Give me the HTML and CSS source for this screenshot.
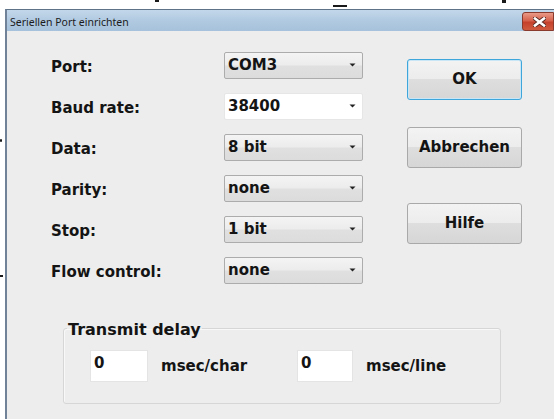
FILE: index.html
```html
<!DOCTYPE html>
<html lang="de">
<head>
<meta charset="utf-8">
<title>Seriellen Port einrichten</title>
<link rel="stylesheet" href="styles.css">
</head>
<body>
<div class="screen">
  <!-- bits of the document behind the dialog -->
  <span class="speck speck-a"></span>
  <span class="speck speck-b"></span>
  <span class="speck speck-c"></span>
  <span class="speck speck-d"></span>
  <span class="speck speck-e"></span>
  <div class="window">
    <div class="titlebar">
      <span class="title">Seriellen Port einrichten</span>
      <button class="close" type="button" aria-label="Schließen">
        <svg width="13" height="10" viewBox="0 0 13 10">
          <path d="M2 1.5L11 8.5M11 1.5L2 8.5" stroke="#5a2a22" stroke-width="4.4" stroke-linecap="square"/>
          <path d="M2 1.5L11 8.5M11 1.5L2 8.5" stroke="#ffffff" stroke-width="2.6" stroke-linecap="square"/>
        </svg>
      </button>
    </div>
    <div class="client">
      <div class="main">
        <div class="form">
          <span class="label">Port:</span>
          <div class="combo"><span>COM3</span><svg class="arrow" width="7" height="4" viewBox="0 0 7 4"><path d="M0.5 0.5h6L3.5 3.5z" fill="#222"/></svg></div>
          <span class="label">Baud rate:</span>
          <div class="combo combo-edit"><span>38400</span><svg class="arrow" width="7" height="4" viewBox="0 0 7 4"><path d="M0.5 0.5h6L3.5 3.5z" fill="#222"/></svg></div>
          <span class="label">Data:</span>
          <div class="combo"><span>8 bit</span><svg class="arrow" width="7" height="4" viewBox="0 0 7 4"><path d="M0.5 0.5h6L3.5 3.5z" fill="#222"/></svg></div>
          <span class="label">Parity:</span>
          <div class="combo"><span>none</span><svg class="arrow" width="7" height="4" viewBox="0 0 7 4"><path d="M0.5 0.5h6L3.5 3.5z" fill="#222"/></svg></div>
          <span class="label">Stop:</span>
          <div class="combo"><span>1 bit</span><svg class="arrow" width="7" height="4" viewBox="0 0 7 4"><path d="M0.5 0.5h6L3.5 3.5z" fill="#222"/></svg></div>
          <span class="label">Flow control:</span>
          <div class="combo"><span>none</span><svg class="arrow" width="7" height="4" viewBox="0 0 7 4"><path d="M0.5 0.5h6L3.5 3.5z" fill="#222"/></svg></div>
        </div>
        <div class="buttons">
          <button class="btn btn-default" type="button">OK</button>
          <button class="btn" type="button">Abbrechen</button>
          <button class="btn btn-help" type="button">Hilfe</button>
        </div>
      </div>
      <fieldset class="delay">
        <legend>Transmit delay</legend>
        <div class="delay-row">
          <div class="pair"><span class="field">0</span><span class="unit">msec/char</span></div>
          <div class="pair"><span class="field field-narrow">0</span><span class="unit">msec/line</span></div>
        </div>
      </fieldset>
    </div>
  </div>
</div>
</body>
</html>
```

FILE: styles.css
```css
* {
  box-sizing: border-box;
}

html, body {
  margin: 0;
  padding: 0;
  background: #ffffff;
}

.screen {
  position: relative;
  width: 554px;
  height: 419px;
  overflow: hidden;
  padding: 9px 0 0 5px;
}

/* stray glyph fragments of the page underneath */
.speck {
  position: absolute;
  background: #1a1a1a;
}

.speck-a { left: 155px; top: 0; width: 4px; height: 2px; }
.speck-b { left: 333px; top: 5px; width: 14px; height: 2px; }
.speck-c { left: 502px; top: 0; width: 4px; height: 3px; }
.speck-d { left: 0; top: 139px; width: 2px; height: 3px; border-radius: 1px; }
.speck-e { left: 0; top: 275px; width: 3px; height: 2px; }

.window {
  width: 549px;
  height: 410px;
  border-left: 2px solid #6f8297;
  border-top: 1px solid #5f7388;
  display: flex;
  flex-direction: column;
  font-family: "DejaVu Sans", sans-serif;
  font-weight: bold;
  color: #141414;
}

/* caption strip */
.titlebar {
  height: 21px;
  flex: none;
  display: flex;
  align-items: flex-start;
  background: linear-gradient(#c3d7ea, #b2cbe2 45%, #a6c1db);
}

.title {
  font-family: "Noto Sans", sans-serif;
  font-weight: normal;
  font-size: 10.5px;
  line-height: 21px;
  color: #1b1b1b;
  padding: 2px 0 0 3px;
}

.close {
  margin: 2px 0 0 auto;
  width: 32px;
  height: 19px;
  padding: 0 0 0 2px;
  border: 1px solid #8a3a2c;
  border-radius: 3px 0 0 3px;
  background: linear-gradient(#e99a88, #d6624c 45%, #c5412c 55%, #cf5a3e);
  display: flex;
  align-items: center;
  justify-content: center;
}

.close svg {
  display: block;
}

/* dialog body */
.client {
  flex: 1;
  background: #ededed;
  padding: 21px 0 0 44px;
}

.main {
  display: flex;
  gap: 44px;
}

.form {
  display: grid;
  grid-template-columns: 173px 139px;
  grid-auto-rows: 27px;
  row-gap: 14px;
  align-items: center;
}

.label {
  font-size: 15px;
  line-height: 17px;
  padding-top: 3px;
}

.combo {
  height: 27px;
  display: flex;
  align-items: center;
  justify-content: space-between;
  padding: 0 6px 1px 3px;
  border: 1px solid #acacac;
  border-radius: 2px;
  background: linear-gradient(#f4f4f4, #ececec 48%, #e0e0e0 52%, #dcdcdc);
  font-size: 15px;
  line-height: 17px;
}

.combo-edit {
  background: #ffffff;
  border-color: #e6e6e6;
}

.arrow {
  display: block;
  flex: none;
}

.buttons {
  display: flex;
  flex-direction: column;
  gap: 27px;
  padding-top: 7px;
}

.btn {
  width: 115px;
  height: 41px;
  border: 1px solid #a9a9a9;
  border-radius: 3px;
  background: linear-gradient(#f3f3f3, #ececec 50%, #dedede 50%, #d6d6d6);
  font-family: "DejaVu Sans", sans-serif;
  font-weight: bold;
  font-size: 15px;
  color: #141414;
  padding: 0 0 2px;
}

.btn-default {
  border-color: #3ea6db;
  box-shadow: inset 0 0 0 1px #c8e6f6;
}

.btn-help {
  margin-top: 8px;
}

/* transmit delay group */
.delay {
  width: 438px;
  margin: 35px 0 0 12px;
  padding: 12px 0 21px 3px;
  border: 1px solid #d6d6d6;
  border-radius: 3px;
  box-shadow: inset 1px 1px 0 #f8f8f8;
}

.delay legend {
  padding: 0 1px;
  font-size: 16px;
  line-height: 19px;
  position: relative;
  top: 1px;
}

.delay-row {
  display: grid;
  grid-template-columns: 207px auto;
  padding-left: 23px;
}

.pair {
  display: flex;
  align-items: center;
  gap: 13px;
}

.field {
  width: 58px;
  height: 32px;
  background: #ffffff;
  border: 1px solid #e4e4e4;
  padding: 4px 0 0 3px;
  font-size: 15px;
  line-height: 17px;
}

.field-narrow {
  width: 56px;
}

.unit {
  font-size: 15px;
  line-height: 17px;
}
```
